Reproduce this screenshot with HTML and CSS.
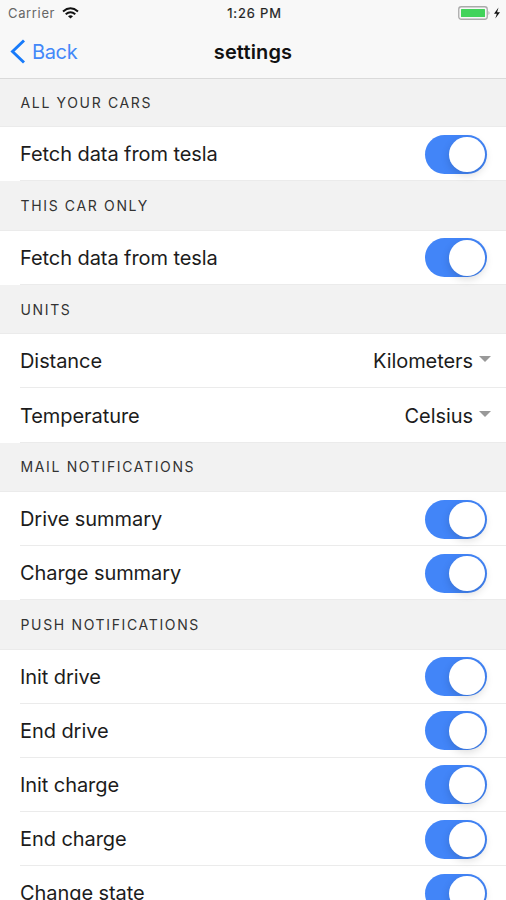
FILE: index.html
```html
<!DOCTYPE html>
<html lang="en">
<head>
<meta charset="utf-8">
<title>settings</title>
<link rel="stylesheet" href="styles.css">
</head>
<body>
<header class="top">
  <div class="status">
    <div class="carrier"><span>Carrier</span>
      <svg class="wifi" width="17" height="12" viewBox="0 0 17 12"><g fill="none" stroke="#111" stroke-width="2"><path d="M1 4.4Q8.500-1.900 16 4.400"/><path d="M3.700 7.300Q8.500 3.200 13.300 7.300"/></g><path d="M8.500 11.600L6 9.200Q8.500 7.200 11 9.200Z" fill="#111"/></svg>
    </div>
    <div class="time">1:26 PM</div>
    <div class="power">
      <svg width="43" height="16" viewBox="0 0 43 16"><rect x=".75" y="1.750" width="28.500" height="12.500" rx="2.500" fill="#f8f8f8" stroke="#aaa" stroke-width="1.300"/><rect x="3" y="4" width="24" height="8" rx=".5" fill="#42d35b"/><path d="M30.500 6Q32.500 8 30.500 10Z" fill="#aaa"/><path d="M40.500 2.500L36 8.700h2.800L37.300 13.500L42 7.200h-2.900Z" fill="#111"/></svg>
    </div>
  </div>
  <nav class="nav">
    <a class="back"><svg width="16" height="26" viewBox="0 0 16 26"><path d="M14 1.500L2.500 12.500L14 23.500" fill="none" stroke="#187bfa" stroke-width="2.900"/></svg><span>Back</span></a>
    <h1 class="title">settings</h1>
  </nav>
</header>
<main>
  <h2 class="section first"><span>ALL YOUR CARS</span></h2>
  <div class="row"><div class="inner"><span class="label">Fetch data from tesla</span><i class="toggle"></i></div></div>
  <h2 class="section"><span>THIS CAR ONLY</span></h2>
  <div class="row"><div class="inner"><span class="label">Fetch data from tesla</span><i class="toggle"></i></div></div>
  <h2 class="section"><span>UNITS</span></h2>
  <div class="row"><div class="inner"><span class="label">Distance</span><span class="value">Kilometers<i class="caret"></i></span></div></div>
  <div class="row"><div class="inner"><span class="label">Temperature</span><span class="value">Celsius<i class="caret"></i></span></div></div>
  <h2 class="section"><span>MAIL NOTIFICATIONS</span></h2>
  <div class="row"><div class="inner"><span class="label">Drive summary</span><i class="toggle"></i></div></div>
  <div class="row"><div class="inner"><span class="label">Charge summary</span><i class="toggle"></i></div></div>
  <h2 class="section"><span>PUSH NOTIFICATIONS</span></h2>
  <div class="row"><div class="inner"><span class="label">Init drive</span><i class="toggle"></i></div></div>
  <div class="row"><div class="inner"><span class="label">End drive</span><i class="toggle"></i></div></div>
  <div class="row"><div class="inner"><span class="label">Init charge</span><i class="toggle"></i></div></div>
  <div class="row"><div class="inner"><span class="label">End charge</span><i class="toggle"></i></div></div>
  <div class="row"><div class="inner"><span class="label">Change state</span><i class="toggle"></i></div></div>
</main>
</body>
</html>
```
FILE: styles.css
```css
* { box-sizing: border-box; }
body { margin: 0; height: 900px; overflow: hidden; background: #fff; color: #1c1c1c; font-family: Inter, "Liberation Sans", sans-serif; }
.top { height: 79px; background: #f8f8f8; border-bottom: 1px solid #dadada; }
.status { height: 26px; padding: 0 5px 0 8px; display: grid; grid-template-columns: 1fr auto 1fr; align-items: center; font-size: 13px; }
.carrier { display: flex; align-items: center; gap: 7px; color: #666; letter-spacing: .65px; }
.time { letter-spacing: .85px; color: #222; font-weight: 400; -webkit-text-stroke: .2px #222; }
.power { display: flex; justify-content: flex-end; }
.nav { height: 52px; padding: 0 10px; display: grid; grid-template-columns: 1fr auto 1fr; align-items: center; }
.back { display: flex; align-items: center; gap: 6px; color: #4388f9; font-size: 20px; letter-spacing: -.35px; }
.title { margin: 0; color: #111; font-size: 20px; font-weight: 600; letter-spacing: .15px; }
.section { margin: 0; height: 49.5px; padding-left: 20.5px; display: flex; align-items: center; background: #f2f2f2; border-bottom: 1px solid #ebebeb; color: #333; font-size: 14px; font-weight: 400; letter-spacing: 1.65px; }
.first { height: 48.2px; }
.row { height: 54.1px; padding-left: 20px; background: #fff; }
.inner { height: 100%; padding: 1px 19px 0 0; display: flex; align-items: center; justify-content: space-between; border-bottom: 1px solid #ebebeb; font-size: 20px; letter-spacing: -.07px; }
.toggle { width: 62px; height: 39px; padding: 2px; display: flex; justify-content: flex-end; border-radius: 20px; background: #4285f8; }
.toggle::after { content: ""; width: 36px; height: 35.5px; border-radius: 50%; background: #fff; box-shadow: 0 3px 9px rgba(0, 0, 0, .15); }
.value { display: flex; align-items: center; gap: 6px; margin-right: -4px; }
.caret { margin-top: -4px; border: 6px solid transparent; border-top-color: #999; border-bottom: 0; }
```
